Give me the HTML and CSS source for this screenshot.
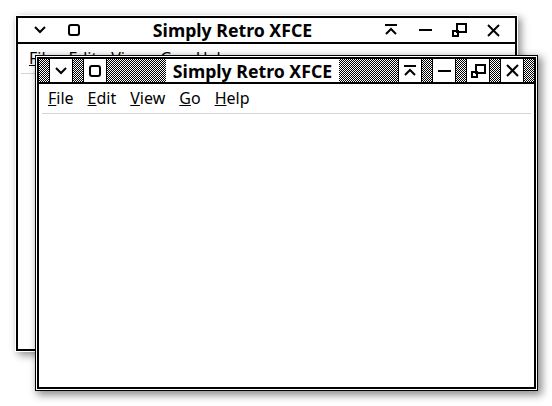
FILE: index.html
```html
<!DOCTYPE html>
<html>
<head>
  <meta charset="UTF-8">
  <title>Simply Retro XFCE</title>
  <link rel="stylesheet" href="styles.css">
</head>
<body>
  <div class="desktop">

    <!-- inactive window behind -->
    <div class="window back">
      <div class="titlebar">
        <span class="fill edge"></span>
        <span class="btn"><svg width="12" height="8" viewBox="0 0 12 8"><polyline points="1,1 6,6 11,1"/></svg></span>
        <span class="fill edge"></span>
        <span class="btn"><svg width="12" height="12" viewBox="0 0 12 12"><rect x="1" y="1" width="10" height="10" rx="2"/></svg></span>
        <span class="fill"></span>
        <span class="title">Simply Retro XFCE</span>
        <span class="fill"></span>
        <span class="btn"><svg width="14" height="12" viewBox="0 0 14 12"><line x1="1" y1="1" x2="13" y2="1"/><polyline points="2,10 7,5 12,10"/></svg></span>
        <span class="fill edge"></span>
        <span class="btn"><svg width="13" height="12" viewBox="0 0 13 12"><line x1="0" y1="6" x2="13" y2="6"/></svg></span>
        <span class="fill edge"></span>
        <span class="btn"><svg width="15" height="14" viewBox="0 0 15 14"><rect x="5" y="1" width="9" height="8"/><rect x="1" y="8" width="5" height="5"/></svg></span>
        <span class="fill edge"></span>
        <span class="btn"><svg width="13" height="13" viewBox="0 0 13 13"><line x1="1" y1="1" x2="12" y2="12"/><line x1="12" y1="1" x2="1" y2="12"/></svg></span>
        <span class="fill edge"></span>
      </div>
      <div class="menubar">
        <span><u>F</u>ile</span>
        <span><u>E</u>dit</span>
        <span><u>V</u>iew</span>
        <span><u>G</u>o</span>
        <span><u>H</u>elp</span>
      </div>
    </div>

    <!-- active window in front -->
    <div class="window front">
      <div class="frame">
        <div class="titlebar">
          <span class="fill edge"></span>
          <span class="btn"><svg width="12" height="8" viewBox="0 0 12 8"><polyline points="1,1 6,6 11,1"/></svg></span>
          <span class="fill edge"></span>
          <span class="btn"><svg width="12" height="12" viewBox="0 0 12 12"><rect x="1" y="1" width="10" height="10" rx="2"/></svg></span>
          <span class="fill"></span>
          <span class="title">Simply Retro XFCE</span>
          <span class="fill"></span>
          <span class="btn"><svg width="14" height="12" viewBox="0 0 14 12"><line x1="1" y1="1" x2="13" y2="1"/><polyline points="2,10 7,5 12,10"/></svg></span>
          <span class="fill edge"></span>
          <span class="btn"><svg width="13" height="12" viewBox="0 0 13 12"><line x1="0" y1="6" x2="13" y2="6"/></svg></span>
          <span class="fill edge"></span>
          <span class="btn"><svg width="15" height="14" viewBox="0 0 15 14"><rect x="5" y="1" width="9" height="8"/><rect x="1" y="8" width="5" height="5"/></svg></span>
          <span class="fill edge"></span>
          <span class="btn"><svg width="13" height="13" viewBox="0 0 13 13"><line x1="1" y1="1" x2="12" y2="12"/><line x1="12" y1="1" x2="1" y2="12"/></svg></span>
          <span class="fill edge"></span>
        </div>
        <div class="menubar">
          <span><u>F</u>ile</span>
          <span><u>E</u>dit</span>
          <span><u>V</u>iew</span>
          <span><u>G</u>o</span>
          <span><u>H</u>elp</span>
        </div>
      </div>
    </div>

  </div>
</body>
</html>
```

FILE: styles.css
```css
body{
  margin: 0;
  background: #fff;
  font-family: "Noto Sans", "Open Sans", sans-serif;
}
.desktop{
  position: relative;
  width: 552px;
  height: 406px;
  overflow: hidden;
}
.window{
  position: absolute; /* windows sit on the desktop */
  box-sizing: border-box;
  background: #fff;
}
.back{
  left: 16px;
  top: 16px;
  width: 501px;
  height: 335px;
  border: 2px solid #000;
  box-shadow: 0 0 0 1px #fff, 3px 3px 8px 1px rgba(0, 0, 0, 0.45);
}
.front{
  left: 35px;
  top: 55px;
  width: 503px;
  height: 336px;
  border: 1px solid #000;
  padding: 1px;
  box-shadow: 3px 3px 8px 1px rgba(0, 0, 0, 0.45);
}
.frame{
  box-sizing: border-box;
  height: 100%;
  border: 2px solid #000;
}
.titlebar{
  display: flex;
  height: 23px;
  border-bottom: 2px solid #000;
}
.back .titlebar{
  height: 24px;
}
.fill{
  flex: 1;
}
.fill.edge{
  flex: 0 0 10px;
}
.front .fill{
  background: repeating-conic-gradient(#000 0 25%, #fff 0 50%) 0 0 / 2px 2px;
}
.btn{
  flex: 0 0 22px;
  display: flex;
  align-items: center;
  justify-content: center;
  border-left: 1px solid transparent;
  border-right: 1px solid transparent;
}
.front .btn{
  border-color: #000;
}
.btn svg{
  fill: none;
  stroke: #000;
  stroke-width: 2;
}
.title{
  display: flex;
  align-items: center;
  padding: 0 7px;
  font-size: 17.7px;
  font-weight: bold;
  color: #000;
}
.menubar{
  display: flex;
  gap: 14px;
  height: 26px;
  align-items: flex-start;
  padding: 3px 6px 0;
  margin: 0 3px;
  border-bottom: 1px solid #d4d4d4;
  font-size: 16px;
  color: #000;
}
.back .menubar{
  padding-left: 8px;
}
```
